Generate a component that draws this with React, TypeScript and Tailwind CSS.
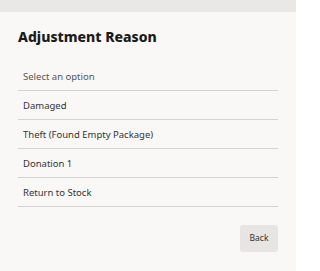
import React from 'react';

const reasons = ['Select an option', 'Damaged', 'Theft (Found Empty Package)', 'Donation 1', 'Return to Stock'];

export default function App() {
  return (
    <div className="w-[296px] h-[271px] bg-[#f9f8f6] flex flex-col font-['Noto_Sans',sans-serif]">
      <div className="h-[12px] bg-[#e9e8e6]" />
      <div className="flex flex-col px-[18px] pt-[15px]">
        <h2 className="text-[14px] leading-[20px] font-extrabold text-[#1b1b1b]">Adjustment Reason</h2>
        <ul className="mt-[15px]">
          {reasons.map((r, i) => (
            <li
              key={r}
              className={`h-[29px] flex items-center pl-[5px] pt-[2px] text-[9.5px] border-b border-[#d4d3d1] ${i === 0 ? 'text-[#555]' : 'text-[#333]'}`}
            >
              {r}
            </li>
          ))}
        </ul>
        <div className="flex justify-end mt-[18px]">
          <button className="w-[38px] h-[27px] rounded-[3px] bg-[#e6e5e3] text-[8.5px] text-[#333]">Back</button>
        </div>
      </div>
    </div>
  );
}
